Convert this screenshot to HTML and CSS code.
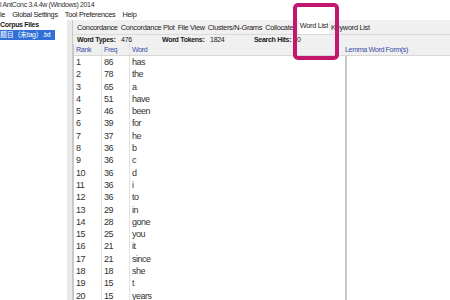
FILE: index.html
```html
<!DOCTYPE html>
<html lang="en">
<head>
    <meta charset="UTF-8">
    <title>AntConc 3.4.4w (Windows) 2014</title>
    <link rel="stylesheet" href="styles.css">
</head>
<body>
    <div class="titlebar">l AntConc 3.4.4w (Windows) 2014</div>
    <div class="menubar">
        <span>le</span>
        <span>Global Settings</span>
        <span>Tool Preferences</span>
        <span>Help</span>
    </div>
    <div class="main">
        <div class="corpus">
            <div class="corpus-head">Corpus Files</div>
            <div class="file-item">题目（未tag）.txt</div>
        </div>
        <div class="splitter"></div>
        <div class="tool">
            <div class="tabs">
                <span class="tab">Concordance</span>
                <span class="tab">Concordance Plot</span>
                <span class="tab">File View</span>
                <span class="tab">Clusters/N-Grams</span>
                <span class="tab">Collocates</span>
                <span class="tab active">Word List</span>
                <span class="tab">Keyword List</span>
            </div>
            <div class="stats">
                <span class="stat types"><b>Word Types:</b> 476</span>
                <span class="stat tokens"><b>Word Tokens:</b> 1824</span>
                <span class="stat"><b>Search Hits:</b> 0</span>
            </div>
            <div class="panes">
                <div class="wordlist">
                    <div class="list-head">
                        <span class="c-rank">Rank</span>
                        <span class="c-freq">Freq</span>
                        <span class="c-word">Word</span>
                    </div>
                    <div class="list-body" id="rows"></div>
                </div>
                <div class="lemma">
                    <div class="lemma-head">Lemma Word Form(s)</div>
                    <div class="lemma-body"></div>
                </div>
            </div>
        </div>
    </div>
    <div class="highlight"></div>

    <script>
        const words = [
            [86, 'has'], [78, 'the'], [65, 'a'], [51, 'have'], [46, 'been'],
            [39, 'for'], [37, 'he'], [36, 'b'], [36, 'c'], [36, 'd'],
            [36, 'i'], [36, 'to'], [29, 'in'], [28, 'gone'], [25, 'you'],
            [21, 'it'], [21, 'since'], [18, 'she'], [15, 't'], [15, 'years']
        ];
        const rows = document.getElementById('rows');
        words.forEach((w, i) => {
            const row = document.createElement('div');
            row.className = 'row';
            row.innerHTML = `<span class="c-rank">${i + 1}</span><span class="c-freq">${w[0]}</span><span class="c-word">${w[1]}</span>`;
            rows.appendChild(row);
        });
    </script>
</body>
</html>
```

FILE: styles.css
```css
body {
    margin: 0;
    width: 450px;
    height: 300px;
    overflow: hidden;
    background-color: #fff;
    font-family: "Liberation Sans", "Noto Sans CJK SC", sans-serif;
    font-size: 7.4px;
    letter-spacing: -0.3px;
    color: #222;
    position: relative;
}

.titlebar {
    height: 10px;
    line-height: 10px;
    font-size: 7px;
    letter-spacing: -0.35px;
    color: #333;
}

.menubar {
    height: 10px;
    line-height: 10px;
    display: flex;
    gap: 7px;
}

.main {
    display: flex;
    height: 280px;
}

.corpus {
    width: 67px;
    flex-shrink: 0;
}

.corpus-head {
    height: 10px;
    line-height: 10px;
    font-weight: bold;
    font-size: 7px;
}

.file-item {
    width: 55px;
    height: 10px;
    line-height: 10px;
    background-color: #2f6fd6;
    color: #fff;
    white-space: nowrap;
    overflow: hidden;
    font-size: 7px;
}

.splitter {
    width: 5px;
    flex-shrink: 0;
    background-color: #e9e9e9;
    border-right: 1px solid #c9c9c9;
}

.tool {
    flex: 1;
    min-width: 0;
    display: flex;
    flex-direction: column;
    background-color: #f0f0f0;
}

.tabs {
    height: 15px;
    display: flex;
    align-items: flex-end;
    padding-left: 3px;
    border-bottom: 1px solid #dadada;
    box-sizing: border-box;
}

.tab {
    padding: 0 1px;
    height: 12px;
    line-height: 12px;
    white-space: nowrap;
    margin-right: 1px;
}

.tab.active {
    background-color: #fff;
    height: 14px;
    line-height: 12px;
}

.stats {
    height: 9px;
    line-height: 9px;
    display: flex;
    padding-left: 4px;
    font-size: 7px;
}

.stat {
    white-space: nowrap;
}

.stat b {
    margin-right: 4px;
}

.stat.types {
    width: 85px;
}

.stat.tokens {
    width: 92px;
}

.panes {
    flex: 1;
    display: flex;
}

.wordlist {
    width: 272px;
    flex-shrink: 0;
    display: flex;
    flex-direction: column;
    border-left: 1px solid #c8c8c8;
    box-sizing: border-box;
}

.list-head,
.row {
    display: flex;
}

.list-head,
.lemma-head {
    height: 11px;
    line-height: 11px;
    font-size: 7.2px;
    letter-spacing: -0.4px;
    color: #3b4fa8;
    border-bottom: 1px solid #d8d8d8;
    white-space: nowrap;
}

.list-body {
    flex: 1;
    background-color: #fff;
    font-size: 9px;
    letter-spacing: -0.5px;
    color: #333;
}

.row {
    height: 12.3px;
    line-height: 12.3px;
}

.c-rank,
.c-freq {
    width: 25px;
    padding-left: 2px;
    border-right: 1px solid #e2e2e2;
}

.c-word {
    padding-left: 2px;
}

.lemma {
    flex: 1;
    display: flex;
    flex-direction: column;
}

.lemma-body {
    flex: 1;
    background-color: #fff;
    border-left: 2px solid #c8c8c8;
}

.highlight {
    position: absolute;
    left: 293px;
    top: 3px;
    width: 38px;
    height: 49px;
    border: 4px solid #c2176c;
    border-radius: 5px;
}
```
